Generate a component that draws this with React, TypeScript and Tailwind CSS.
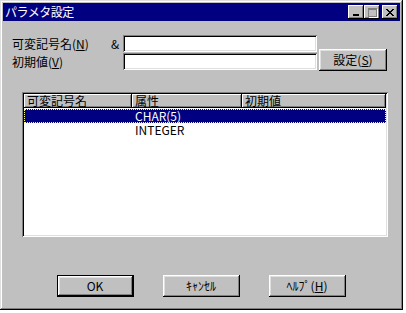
const raised =
  'shadow-[inset_-1px_-1px_#000,inset_1px_1px_#fff,inset_-2px_-2px_#808080,inset_2px_2px_#dfdfdf]'
const sunken =
  'shadow-[inset_1px_1px_#808080,inset_-1px_-1px_#fff,inset_2px_2px_#000,inset_-2px_-2px_#dfdfdf]'

function TitleButton({ children, gap }: { children: React.ReactNode; gap?: boolean }) {
  return (
    <div
      className={`w-[16px] h-[14px] bg-[#c0c0c0] flex items-center justify-center shadow-[inset_-1px_-1px_#000,inset_1px_1px_#fff,inset_-2px_-2px_#808080] ${gap ? 'ml-[2px]' : ''}`}
    >
      {children}
    </div>
  )
}

function Button({ children, isDefault }: { children: React.ReactNode; isDefault?: boolean }) {
  return (
    <div
      className={`w-[77px] h-[22px] bg-[#c0c0c0] flex items-center justify-center text-[12px] text-black ${
        isDefault ? 'border border-black' : ''
      }`}
    >
      <div className={`w-full h-full flex items-center justify-center ${raised}`}>{children}</div>
    </div>
  )
}

const headers = [
  { label: '可変記号名', w: 'w-[108px]' },
  { label: '属性', w: 'w-[110px]' },
  { label: '初期値', w: 'flex-1' }
]

const rows = [
  { name: '', attr: 'CHAR(5)', value: '', selected: true },
  { name: '', attr: 'INTEGER', value: '', selected: false }
]

export default function App() {
  return (
    <div className="w-[406px] h-[313px] bg-white font-['Noto_Sans_CJK_JP',sans-serif] text-[12px] leading-none">
      <div className="w-[403px] h-[310px] bg-[#c0c0c0] p-[3px] flex flex-col shadow-[inset_-1px_-1px_#000,inset_1px_1px_#dfdfdf,inset_-2px_-2px_#808080,inset_2px_2px_#fff]">
        {/* title bar */}
        <div className="h-[18px] bg-[#000080] flex items-center justify-between pl-[2px] pr-[2px]">
          <span className="text-white text-[12px] tracking-[-0.5px]">パラメタ設定</span>
          <div className="flex items-center">
            <TitleButton>
              <div className="w-[6px] h-[2px] bg-black mt-[6px] -ml-[1px]" />
            </TitleButton>
            <TitleButton>
              <div className="w-[9px] h-[9px] border border-t-2 border-[#808080] shadow-[1px_1px_#fff]" />
            </TitleButton>
            <TitleButton gap>
              <svg width="8" height="7" viewBox="0 0 8 7" shapeRendering="crispEdges" className="-ml-[1px]">
                <path
                  d="M0 0h2v1h-2zM6 0h2v1h-2zM1 1h2v1h-2zM5 1h2v1h-2zM2 2h4v1h-4zM3 3h2v1h-2zM2 4h4v1h-4zM1 5h2v1h-2zM5 5h2v1h-2zM0 6h2v1h-2zM6 6h2v1h-2z"
                  fill="#000"
                />
              </svg>
            </TitleButton>
          </div>
        </div>

        {/* fields */}
        <div className="pl-[9px] mt-[14px] flex">
          <div className="flex flex-col gap-[1px]">
            <div className="flex items-center h-[17px]">
              <span className="w-[99px]">
                可変記号名(<u>N</u>)
              </span>
              <span className="w-[12px]">&amp;</span>
              <div className={`w-[194px] h-[17px] bg-white ${sunken}`} />
            </div>
            <div className="flex items-center h-[17px]">
              <span className="w-[111px]">
                初期値(<u>V</u>)
              </span>
              <div className={`w-[194px] h-[17px] bg-white ${sunken}`} />
            </div>
          </div>
          <div className="self-end ml-[2px] -mb-[1px]">
            <div className={`w-[68px] h-[22px] flex items-center justify-center ${raised}`}>
              設定(<u>S</u>)
            </div>
          </div>
        </div>

        {/* list */}
        <div className={`ml-[19px] mt-[22px] w-[366px] h-[145px] bg-white p-[2px] flex flex-col ${sunken}`}>
          <div className="flex h-[14px] bg-[#c0c0c0]">
            {headers.map((h) => (
              <div
                key={h.label}
                className={`${h.w} h-full flex items-center pl-[3px] shadow-[inset_-1px_-1px_#000,inset_1px_1px_#fff,inset_-2px_-2px_#808080]`}
              >
                {h.label}
              </div>
            ))}
          </div>
          <div className="flex flex-col pt-[1px]">
            {rows.map((r, i) => (
              <div
                key={i}
                className={`flex h-[14px] items-center ${
                  r.selected ? 'bg-[#000080] text-white border border-dotted border-[#ffff80]' : 'text-black'
                }`}
              >
                <span className="w-[108px] pl-[3px]">{r.name}</span>
                <span className={`w-[110px] ${r.selected ? 'pl-[2px]' : 'pl-[3px]'}`}>{r.attr}</span>
                <span className="flex-1 pl-[3px]">{r.value}</span>
              </div>
            ))}
          </div>
        </div>

        {/* bottom buttons */}
        <div className="mt-[38px] flex justify-center gap-[29px] pr-[1px]">
          <Button isDefault>OK</Button>
          <Button>ｷｬﾝｾﾙ</Button>
          <Button>
            ﾍﾙﾌﾟ(<u>H</u>)
          </Button>
        </div>
      </div>
    </div>
  )
}
